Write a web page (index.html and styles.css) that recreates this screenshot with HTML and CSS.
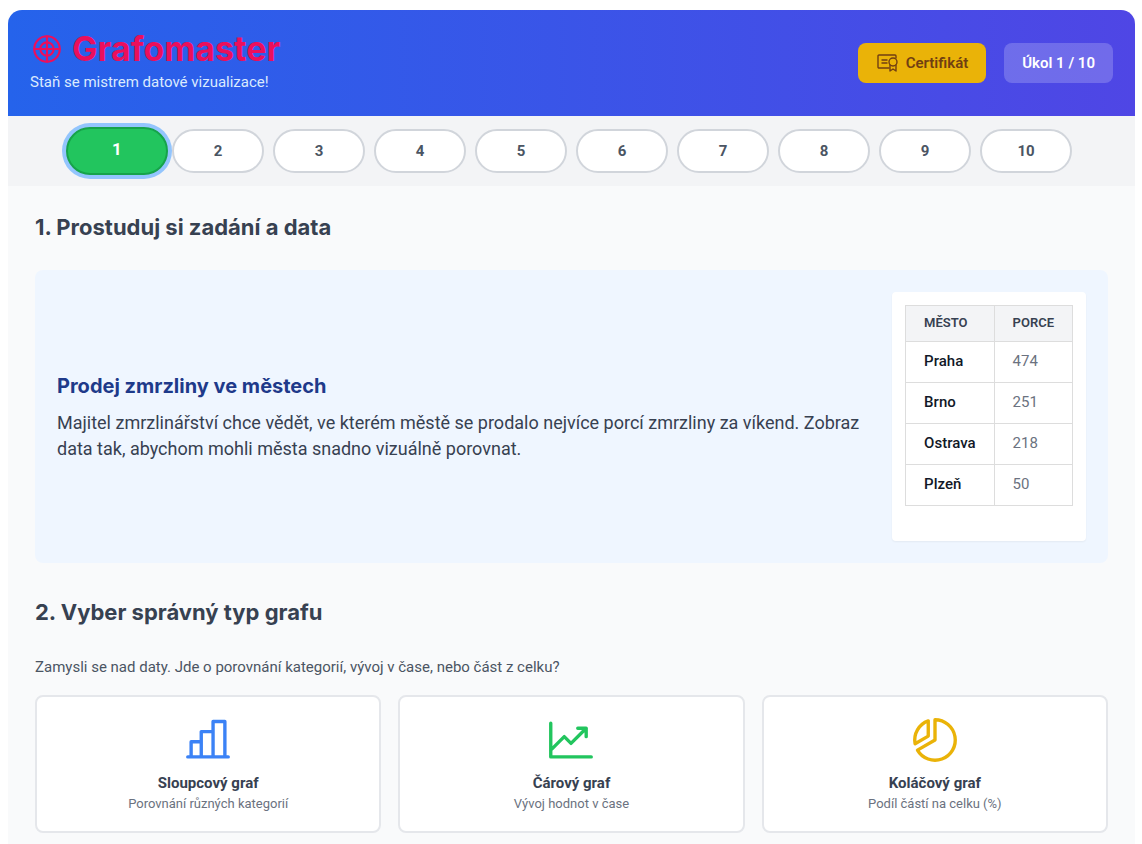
FILE: index.html
```
<!DOCTYPE html>
<html lang="cs">

<head>
    <meta charset="UTF-8">
    <meta name="viewport" content="width=device-width, initial-scale=1.0">
    <title>Grafomaster</title>
    <link rel="stylesheet" href="styles.css">
</head>

<body>
    <div class="app">
        <header class="header">
            <div>
                <h1 class="logo">
                    <svg class="logo-icon" viewBox="0 0 256 256">
                        <circle cx="128" cy="128" r="96" />
                        <circle cx="128" cy="128" r="50" />
                        <path d="M128 32V224M32 128H224" />
                    </svg>
                    Grafomaster
                </h1>
                <p class="tagline">Staň se mistrem datové vizualizace!</p>
            </div>
            <div class="header-right">
                <button type="button" class="certificate">
                    <svg class="certificate-icon" viewBox="0 0 22 22">
                        <path d="M13 16H3a1 1 0 0 1-1-1V4a1 1 0 0 1 1-1h16a1 1 0 0 1 1 1v2M6 8h5M6 11h5" />
                        <circle cx="17" cy="10" r="4" />
                        <path d="M14 13v6l3-2 3 2v-6" />
                    </svg>
                    Certifikát
                </button>
                <div class="counter">Úkol 1 / 10</div>
            </div>
        </header>

        <nav class="tasks">
            <button type="button" class="task active">1</button>
            <button type="button" class="task">2</button>
            <button type="button" class="task">3</button>
            <button type="button" class="task">4</button>
            <button type="button" class="task">5</button>
            <button type="button" class="task">6</button>
            <button type="button" class="task">7</button>
            <button type="button" class="task">8</button>
            <button type="button" class="task">9</button>
            <button type="button" class="task">10</button>
        </nav>

        <main class="content">
            <h2>1. Prostuduj si zadání a data</h2>
            <section class="assignment">
                <div class="assignment-text">
                    <h3>Prodej zmrzliny ve městech</h3>
                    <p>Majitel zmrzlinářství chce vědět, ve kterém městě se prodalo nejvíce porcí zmrzliny za víkend. Zobraz data tak, abychom mohli města snadno vizuálně porovnat.</p>
                </div>
                <div class="data">
                    <table>
                        <thead>
                            <tr><th>Město</th><th>Porce</th></tr>
                        </thead>
                        <tbody>
                            <tr><td>Praha</td><td>474</td></tr>
                            <tr><td>Brno</td><td>251</td></tr>
                            <tr><td>Ostrava</td><td>218</td></tr>
                            <tr><td>Plzeň</td><td>50</td></tr>
                        </tbody>
                    </table>
                </div>
            </section>

            <h2>2. Vyber správný typ grafu</h2>
            <p class="hint">Zamysli se nad daty. Jde o porovnání kategorií, vývoj v čase, nebo část z celku?</p>
            <div class="charts">
                <button type="button" class="chart">
                    <svg class="chart-icon blue" viewBox="0 0 256 256">
                        <path d="M32 208H224M48 208V136H96M96 208V88H152M152 208V40H208V208" />
                    </svg>
                    <span class="chart-name">Sloupcový graf</span>
                    <span class="chart-info">Porovnání různých kategorií</span>
                </button>
                <button type="button" class="chart">
                    <svg class="chart-icon green" viewBox="0 0 256 256">
                        <path d="M224 208H32V48M200 72L128 144L96 112L32 176M200 112V72H160" />
                    </svg>
                    <span class="chart-name">Čárový graf</span>
                    <span class="chart-info">Vývoj hodnot v čase</span>
                </button>
                <button type="button" class="chart">
                    <svg class="chart-icon yellow" viewBox="0 0 256 256">
                        <path d="M128 128V32A96 96 0 1 1 44.9 176Z" />
                        <path d="M96 37.5V109.5L33.6 145.5A96 96 0 0 1 96 37.5Z" />
                    </svg>
                    <span class="chart-name">Koláčový graf</span>
                    <span class="chart-info">Podíl částí na celku (%)</span>
                </button>
            </div>
        </main>
    </div>
</body>

</html>
```
FILE: styles.css
```
* {
    box-sizing: border-box;
}

body {
    margin: 10px 7px 0 8px;
    background: #fff;
    font-family: Roboto, sans-serif;
    font-size: 15px;
    color: #374151;
}

h1, h2, h3, p {
    margin: 0;
}

h1, h2, h3 {
    font-family: Inter, sans-serif;
    font-weight: 700;
}

button {
    font-family: inherit;
    cursor: pointer;
}

svg {
    fill: none;
    stroke: currentColor;
    stroke-linecap: round;
    stroke-linejoin: round;
}

.app {
    min-height: calc(100vh - 10px);
    background: #f9fafb;
    border-radius: 14px 14px 0 0;
    box-shadow: 0 10px 16px rgba(0, 0, 0, 0.08);
    overflow: hidden;
}

/* header */
.header {
    display: flex;
    justify-content: space-between;
    align-items: center;
    height: 106px;
    padding: 0 22px;
    background: linear-gradient(to right, #2563eb, #4f46e5);
}

.logo {
    display: flex;
    align-items: center;
    gap: 8px;
    font-size: 34px;
    line-height: 38px;
    color: #eb0f5c;
}

.logo-icon {
    width: 34px;
    height: 34px;
    stroke-width: 16;
}

.tagline {
    line-height: 28px;
    color: #dbeafe;
}

.header-right {
    display: flex;
    gap: 18px;
}

.certificate, .counter {
    display: flex;
    align-items: center;
    height: 40px;
    padding: 0 18px;
    border: none;
    border-radius: 8px;
    font-size: 15px;
    font-weight: 600;
}

.certificate {
    gap: 8px;
    background: #eab308;
    color: #713f12;
}

.certificate-icon {
    width: 22px;
    height: 22px;
    stroke-width: 1.4;
}

.counter {
    background: rgba(255, 255, 255, 0.2);
    color: #fff;
}

/* task buttons */
.tasks {
    display: flex;
    justify-content: center;
    align-items: center;
    gap: 9px;
    height: 70px;
    background: #f3f4f6;
}

.task {
    width: 92px;
    height: 44px;
    padding: 0;
    border: 2px solid #d1d5db;
    border-radius: 24px;
    background: #fff;
    color: #4b5563;
    font-size: 15px;
    font-weight: 700;
}

.task.active {
    width: 102px;
    height: 48px;
    margin: 0 -5px;
    padding-bottom: 4px;
    background: #22c55e;
    border-color: #16a34a;
    color: #fff;
    font-size: 17px;
    box-shadow: 0 0 0 4px #93c5fd;
}

/* content */
.content {
    padding: 25px 27px 11px;
}

h2 {
    font-size: 22px;
    line-height: 32px;
}

.assignment {
    display: flex;
    align-items: center;
    gap: 22px;
    margin: 27px 0 33px;
    padding: 22px;
    border-radius: 8px;
    background: #eff6ff;
}

.assignment-text {
    flex: 1;
}

.assignment h3 {
    margin-bottom: 10px;
    font-size: 20px;
    line-height: 28px;
    color: #1e3a8a;
}

.assignment p {
    font-size: 18px;
    line-height: 26px;
}

.data {
    padding: 13px 13px 35px;
    border-radius: 4px;
    background: #fff;
    box-shadow: 0 1px 2px rgba(0, 0, 0, 0.05);
}

table {
    border-collapse: collapse;
}

th, td {
    height: 41px;
    padding: 0 18px 2px;
    border: 1px solid #ddd;
    text-align: left;
}

th {
    height: 36px;
    background: #f3f4f6;
    font-size: 13px;
    font-weight: 600;
    text-transform: uppercase;
}

td {
    color: #6b7280;
}

td:first-child {
    color: #111827;
    font-weight: 500;
}

.hint {
    margin: 27px 0 16px;
    line-height: 24px;
    color: #4b5563;
}

.charts {
    display: grid;
    grid-template-columns: repeat(3, 1fr);
    gap: 17px;
}

.chart {
    display: flex;
    flex-direction: column;
    align-items: center;
    padding: 16px 16px 18px;
    border: 2px solid #e5e7eb;
    border-radius: 8px;
    background: #fff;
}

.chart-icon {
    width: 54px;
    height: 54px;
    margin-bottom: 4px;
    stroke-width: 16;
}

.chart-name {
    font-size: 15px;
    font-weight: 700;
    line-height: 24px;
    color: #374151;
}

.chart-info {
    font-size: 13px;
    line-height: 18px;
    color: #6b7280;
}

.blue {
    color: #3b82f6;
}

.green {
    color: #22c55e;
}

.yellow {
    color: #eab308;
}
```
